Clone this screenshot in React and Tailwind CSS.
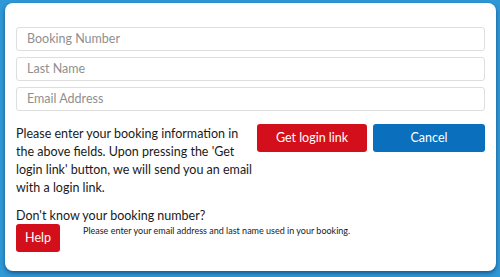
export default function App() {
  return (
    <div className="w-[500px] h-[277px] bg-[#2f98d6] pt-[3px] pl-[5px] pr-[4px] pb-[6px]" style={{ fontFamily: 'Lato, "Noto Sans", sans-serif' }}>
      <div className="w-full h-full bg-white rounded-[8px] shadow-[0_2px_4px_rgba(0,40,90,0.6)] px-[11px] pt-[24px]">
        <div className="flex flex-col gap-[6px]">
          <div className="h-[24px] border border-[#dedede] rounded-[3px] pl-[10px] flex items-center text-[12.5px] text-[#8f8f8f]">Booking Number</div>
          <div className="h-[24px] border border-[#dedede] rounded-[3px] pl-[10px] flex items-center text-[12.5px] text-[#8f8f8f]">Last Name</div>
          <div className="h-[24px] border border-[#dedede] rounded-[3px] pl-[10px] flex items-center text-[12.5px] text-[#8f8f8f]">Email Address</div>
        </div>
        <div className="flex mt-[13px]">
          <p className="w-[238px] text-[12.5px] leading-[18px] text-[#1a1a1a] pt-[1px]">
            Please enter your booking information in the above fields. Upon pressing the 'Get login link' button, we will send you an email with a login link.
          </p>
          <div className="flex gap-[6px] ml-[3px] flex-1">
            <button className="w-[110px] h-[28px] bg-[#d30f1b] text-white text-[12.5px] rounded-[3px]">Get login link</button>
            <button className="flex-1 h-[28px] bg-[#0a6fbd] text-white text-[12.5px] rounded-[3px]">Cancel</button>
          </div>
        </div>
        <div className="mt-[11px] text-[12.5px] leading-[16px] text-[#1a1a1a]">Don't know your booking number?</div>
        <div className="flex items-start">
          <button className="w-[44px] h-[28px] bg-[#d30f1b] text-white text-[12.5px] rounded-[3px]">Help</button>
          <span className="ml-[23px] mt-[1px] text-[9px] leading-[12px] text-[#1a1a1a]">Please enter your email address and last name used in your booking.</span>
        </div>
      </div>
    </div>
  );
}
